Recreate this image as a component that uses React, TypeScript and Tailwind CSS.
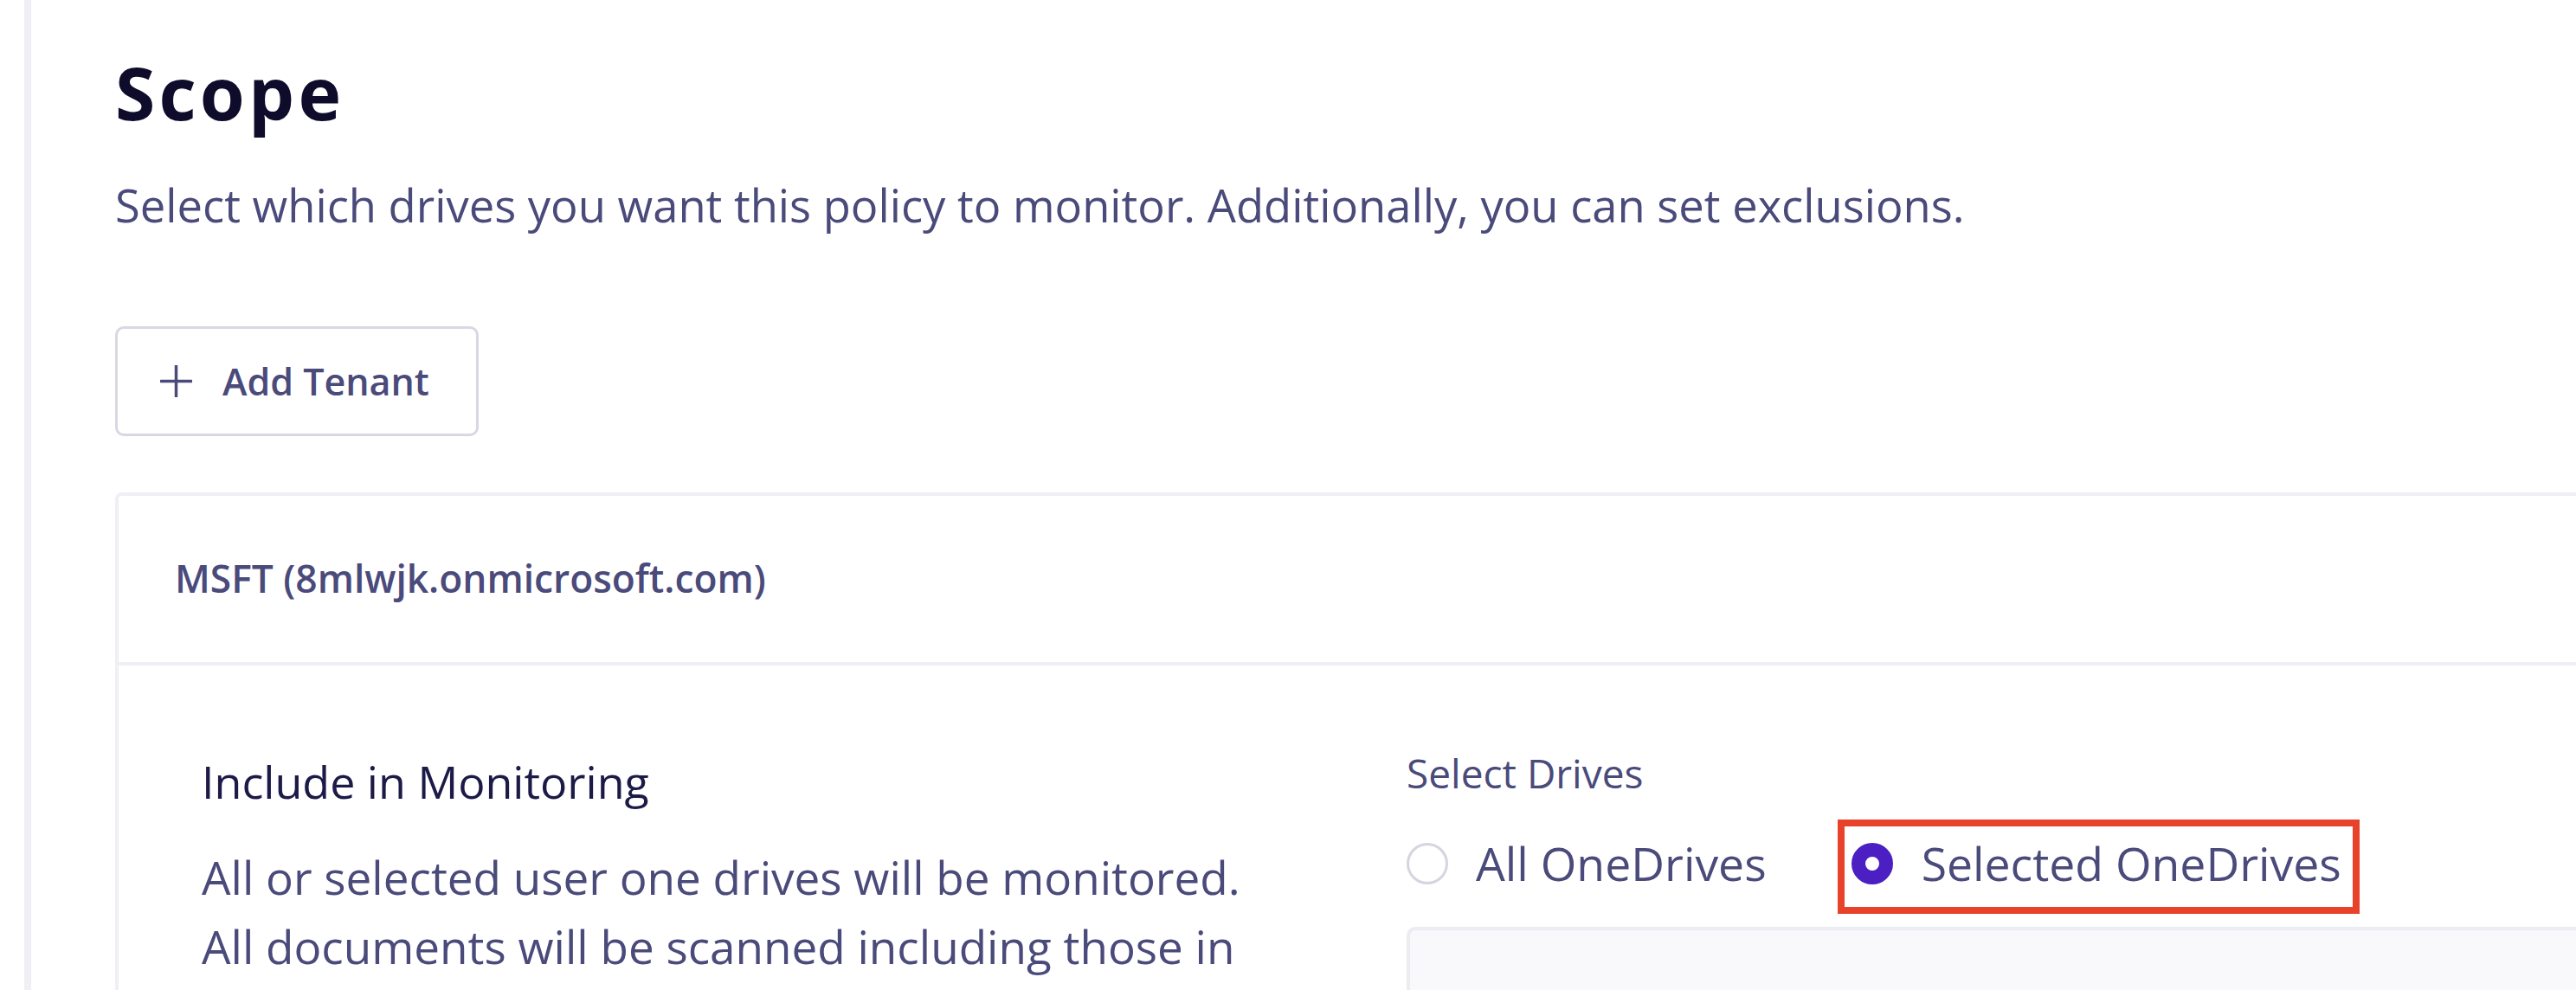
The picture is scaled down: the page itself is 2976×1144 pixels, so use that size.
import React from 'react';

function Radio({ checked }: { checked?: boolean }) {
  if (checked) {
    return <span className="block h-[48px] w-[48px] shrink-0 rounded-full border-[16px] border-[#4b1fc2] bg-white" />;
  }
  return <span className="block h-[48px] w-[48px] shrink-0 rounded-full border-[3px] border-[#d5d5e1] bg-white" />;
}

export default function App() {
  return (
    <div
      className="flex h-[1144px] w-[2976px] overflow-hidden bg-white"
      style={{ fontFamily: '"Open Sans", "Liberation Sans", sans-serif' }}
    >
      <div className="w-[28px] shrink-0" />
      <div className="w-[8px] shrink-0 bg-[#efeff5]" />

      <main className="min-w-0 flex-1 pl-[97px]">
        <h1 className="mt-[65px] text-[84px] font-bold leading-none tracking-[0.05em] text-[#0e0b2b]">Scope</h1>
        <p className="mt-[62px] text-[52.5px] leading-none text-[#4a4a7b]">
          Select which drives you want this policy to monitor. Additionally, you can set exclusions.
        </p>

        <button className="mt-[113px] flex h-[127px] w-[420px] items-center gap-[35px] rounded-[10px] border-[3px] border-[#d8d8e4] bg-white pl-[49px] text-[43px] font-semibold leading-none text-[#4a4a7b]">
          <svg width="37" height="37" viewBox="0 0 37 37" className="shrink-0">
            <path d="M18.5 1v35M1 18.5h35" stroke="#4a4a7b" strokeWidth="3.5" strokeLinecap="round" />
          </svg>
          Add Tenant
        </button>

        <section className="mt-[65px] w-[2900px] rounded-[8px] border-[4px] border-[#efeff5] bg-white">
          <header className="flex h-[192px] items-center pl-[65px] text-[44.3px] font-semibold leading-none text-[#4a4a7b]">
            MSFT (8mlwjk.onmicrosoft.com)
          </header>

          <div className="flex border-t-[4px] border-[#efeff5]">
            <div className="w-[1488px] shrink-0 pl-[96px] pt-[108px]">
              <h2 className="text-[52px] leading-none text-[#1c1a47]">Include in Monitoring</h2>
              <p className="mt-[45px] w-[1240px] text-[53px] leading-[80px] text-[#4a4a7b]">
                All or selected user one drives will be monitored. All documents will be scanned including those in
              </p>
            </div>

            <div className="min-w-0 flex-1 pt-[101px]">
              <div className="text-[46px] leading-none text-[#4a4a7b]">Select Drives</div>

              <div className="mt-[58px] flex items-center gap-[98px]">
                <label className="flex h-[48px] items-center gap-[32px] text-[53.5px] leading-none text-[#4a4a7b]">
                  <Radio />
                  All OneDrives
                </label>
                <label className="relative flex h-[48px] items-center gap-[33px] text-[53.5px] leading-none text-[#4a4a7b]">
                  <Radio checked />
                  Selected OneDrives
                  <span className="pointer-events-none absolute bottom-[-34px] left-[-16px] right-[-21px] top-[-27px] border-[8px] border-[#e8432a]" />
                </label>
              </div>

              <div className="mt-[49px] h-[200px] rounded-tl-[10px] border-l-[4px] border-t-[4px] border-[#ececf3] bg-[#f9f9fc]" />
            </div>
          </div>
        </section>
      </main>
    </div>
  );
}
